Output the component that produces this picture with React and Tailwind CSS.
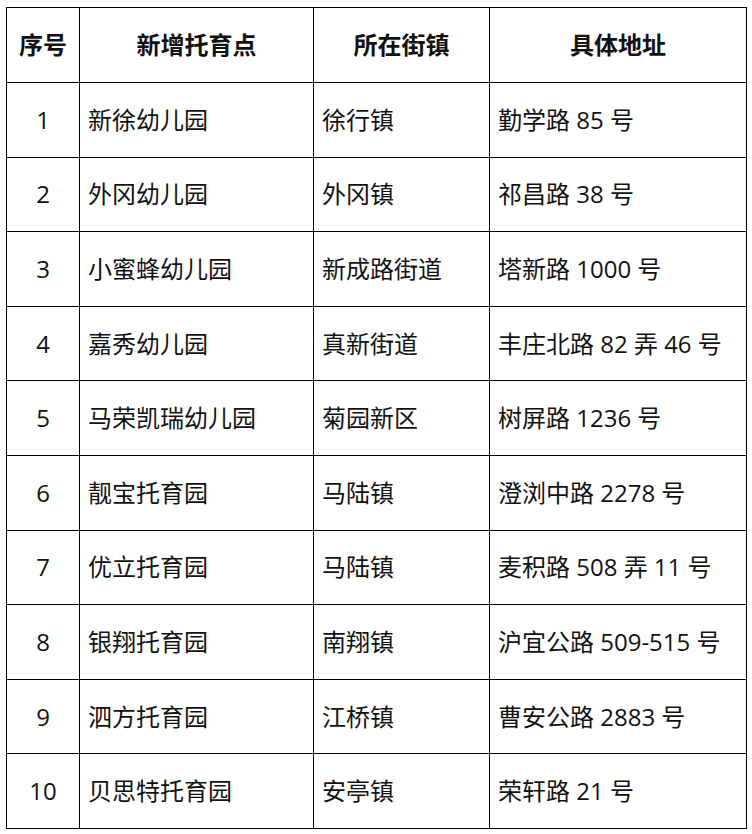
import React from "react";

const rows = [
  ["1", "新徐幼儿园", "徐行镇", "勤学路 85 号"],
  ["2", "外冈幼儿园", "外冈镇", "祁昌路 38 号"],
  ["3", "小蜜蜂幼儿园", "新成路街道", "塔新路 1000 号"],
  ["4", "嘉秀幼儿园", "真新街道", "丰庄北路 82 弄 46 号"],
  ["5", "马荣凯瑞幼儿园", "菊园新区", "树屏路 1236 号"],
  ["6", "靓宝托育园", "马陆镇", "澄浏中路 2278 号"],
  ["7", "优立托育园", "马陆镇", "麦积路 508 弄 11 号"],
  ["8", "银翔托育园", "南翔镇", "沪宜公路 509-515 号"],
  ["9", "泗方托育园", "江桥镇", "曹安公路 2883 号"],
  ["10", "贝思特托育园", "安亭镇", "荣轩路 21 号"],
];

const App = () => {
  return (
    <div className="w-[752px] h-[834px] bg-white pl-[6px] pt-[7px] font-['Open_Sans','Noto_Sans_CJK_SC',sans-serif] text-[#111]">
      <table className="w-[740px] border-collapse table-fixed text-[24px]">
        <colgroup>
          <col className="w-[73px]" />
          <col className="w-[234px]" />
          <col className="w-[176px]" />
          <col className="w-[257px]" />
        </colgroup>
        <thead>
          <tr className="h-[75px] font-bold">
            <th className="border border-black text-center">序号</th>
            <th className="border border-black text-center">新增托育点</th>
            <th className="border border-black text-center">所在街镇</th>
            <th className="border border-black text-center">具体地址</th>
          </tr>
        </thead>
        <tbody>
          {rows.map((r) => (
            <tr key={r[0]} className="h-[74.6px]">
              <td className="border border-black text-center">{r[0]}</td>
              <td className="border border-black pl-[8px] whitespace-nowrap">{r[1]}</td>
              <td className="border border-black pl-[8px] whitespace-nowrap">{r[2]}</td>
              <td className="border border-black pl-[8px] whitespace-nowrap">{r[3]}</td>
            </tr>
          ))}
        </tbody>
      </table>
    </div>
  );
};

export default App;
